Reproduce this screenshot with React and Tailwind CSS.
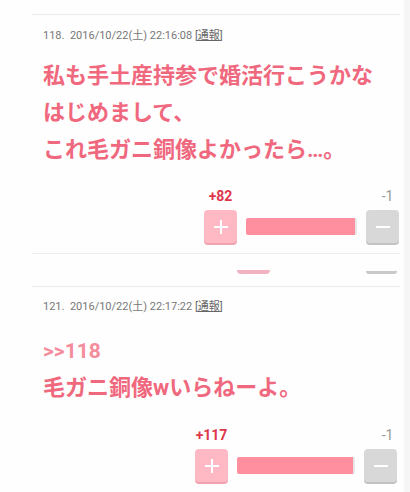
const POSTS = {
  first: {
    no: 118,
    date: "2016/10/22(土) 22:16:08",
    lines: ["私も手土産持参で婚活行こうかな", "はじめまして、", "これ毛ガニ銅像よかったら…。"],
    plus: 82,
    minus: 1,
  },
  second: {
    no: 121,
    date: "2016/10/22(土) 22:17:22",
    anchor: ">>118",
    lines: ["毛ガニ銅像wいらねーよ。"],
    plus: 117,
    minus: 1,
  },
};

function Meta({ no, date }) {
  return (
    <p className="text-[11px] leading-[14px] text-[#777] whitespace-nowrap">
      {no}.&nbsp; {date} <span className="text-[#666]">[<span className="underline">通報</span>]</span>
    </p>
  );
}

function Votes({ plus, minus, plusX, barW }) {
  return (
    <div className="flex flex-col" style={{ marginLeft: plusX }}>
      <div className="flex justify-between text-[14px] leading-[16px]">
        <span className="w-[33px] flex justify-center font-bold text-[#e0364b] whitespace-nowrap">+{plus}</span>
        <span className="w-[33px] flex justify-center text-[#999]">-{minus}</span>
      </div>
      <div className="flex items-center mt-[6px]">
        <div className="w-[33px] h-[33px] rounded-[4px] bg-[#ffb9c4] shadow-[0_2px_0_#eea3af] flex items-center justify-center">
          <svg width="16" height="16" viewBox="0 0 16 16">
            <path d="M8 1v14M1 8h14" stroke="#fff" strokeWidth="2" />
          </svg>
        </div>
        <div className="h-[17px] flex ml-[9px] mr-[9px] rounded-[2px] overflow-hidden" style={{ width: barW }}>
          <div className="flex-1 bg-[#ff8f9e]" />
          <div className="w-[2px] bg-[#e6e6e6]" />
        </div>
        <div className="w-[33px] h-[33px] rounded-[4px] bg-[#d8d8d8] shadow-[0_2px_0_#c2c2c2] flex items-center justify-center">
          <svg width="16" height="16" viewBox="0 0 16 16">
            <path d="M1 8h14" stroke="#fff" strokeWidth="2" />
          </svg>
        </div>
      </div>
    </div>
  );
}

export default function App() {
  const a = POSTS.first;
  const b = POSTS.second;
  return (
    <div
      className="w-[410px] h-[492px] overflow-hidden bg-[#f6f6f6]"
      style={{ fontFamily: 'Roboto, "Noto Sans CJK JP", sans-serif' }}
    >
      <div className="w-[404px] h-full bg-[#fefefe] pt-[14px]">
        <div className="ml-[32px] w-[368px] border-t border-[#ececec]" />

        {/* post 118 */}
        <div className="pl-[43px] pt-[14px]">
          <Meta no={a.no} date={a.date} />
          <div className="mt-[14px] text-[22px] leading-[37px] font-bold text-[#f0687d]">
            {a.lines.map((l) => (
              <p key={l} className="whitespace-nowrap">{l}</p>
            ))}
          </div>
        </div>
        <div className="mt-[20px]">
          <Votes plus={a.plus} minus={a.minus} plusX={204} barW={111} />
        </div>

        <div className="ml-[32px] w-[368px] border-t border-[#ececec] mt-[10px]" />
        <div className="relative h-[32px]">
          <div className="absolute left-[237px] top-[16px] w-[33px] h-[4px] rounded-b-[4px] bg-[#f1b3bf]" />
          <div className="absolute left-[366px] top-[17px] w-[31px] h-[3px] rounded-b-[4px] bg-[#c9c9c9]" />
        </div>
        <div className="ml-[32px] w-[368px] border-t border-[#ececec]" />

        {/* post 121 */}
        <div className="pl-[43px] pt-[13px]">
          <Meta no={b.no} date={b.date} />
          <p className="mt-[19px] text-[21px] leading-[37px] font-bold text-[#f58c9b]">{b.anchor}</p>
          <div className="text-[22px] leading-[36px] font-bold text-[#f0687d]">
            {b.lines.map((l) => (
              <p key={l} className="whitespace-nowrap">{l}</p>
            ))}
          </div>
        </div>
        <div className="mt-[21px]">
          <Votes plus={b.plus} minus={b.minus} plusX={195} barW={118} />
        </div>
      </div>
    </div>
  );
}
